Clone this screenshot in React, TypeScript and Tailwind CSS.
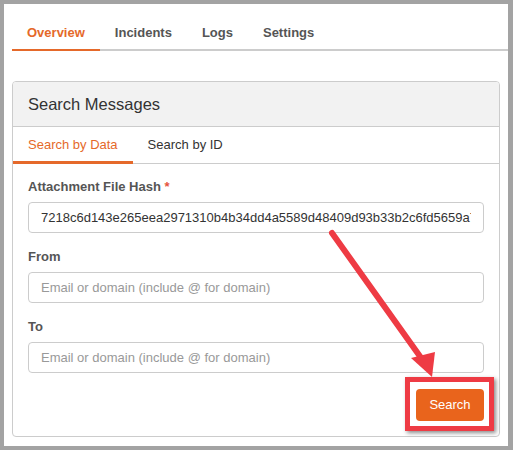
import { useState } from 'react'

const TABS = ['Overview', 'Incidents', 'Logs', 'Settings']
const HASH = '7218c6d143e265eea2971310b4b34dd4a5589d48409d93b33b2c6fd5659a7c1e'

const Field = ({ label, required, value, placeholder }: { label: string; required?: boolean; value?: string; placeholder?: string }) => (
  <div className="flex flex-col gap-[7px]">
    <label className="text-[13px] leading-[16px] font-bold text-[#555]">
      {label}
      {required && <span className="text-[#e5533d]"> *</span>}
    </label>
    <input
      className="h-[31px] w-full rounded-[4px] border border-[#cccccc] px-[12px] text-[13px] text-[#333] placeholder:text-[#999] outline-none"
      defaultValue={value}
      placeholder={placeholder}
    />
  </div>
)

export default function App() {
  const [tab, setTab] = useState('Overview')
  const [sub, setSub] = useState('data')

  return (
    <div className="relative w-[513px] h-[450px] bg-[#a3a3a3] pt-[4px] pl-[4px] pr-[5px] pb-[4px] font-['Liberation_Sans',Arial,sans-serif]">
      <div className="h-full bg-white">
        {/* top tabs */}
        <div className="ml-[8px] flex border-b-2 border-[#cccccc]">
          {TABS.map((t) => (
            <button
              key={t}
              onClick={() => setTab(t)}
              className={`-mb-[2px] border-b-2 px-[15px] pt-[21px] pb-[8px] text-[13px] leading-[16px] font-bold ${
                tab === t ? 'border-[#e5692a] text-[#e5692a]' : 'border-transparent text-[#555]'
              }`}
            >
              {t}
            </button>
          ))}
        </div>

        {/* card */}
        <div className="ml-[8px] mt-[30px] w-[488px] h-[356px] rounded-[4px] border border-[#cccccc] overflow-hidden">
          <div className="flex h-[45px] items-center border-b border-[#cccccc] bg-[#f2f2f2] px-[15px] text-[16.5px] text-[#333]">
            Search Messages
          </div>
          <div className="flex border-b border-[#cccccc]">
            <button
              onClick={() => setSub('data')}
              className={`-mb-px border-b-[3px] px-[15px] pt-[10px] pb-[8px] text-[13px] leading-[16px] ${
                sub === 'data' ? 'border-[#e5692a] text-[#e5692a]' : 'border-transparent text-[#333]'
              }`}
            >
              Search by Data
            </button>
            <button
              onClick={() => setSub('id')}
              className={`-mb-px border-b-[3px] px-[15px] pt-[10px] pb-[8px] text-[13px] leading-[16px] ${
                sub === 'id' ? 'border-[#e5692a] text-[#e5692a]' : 'border-transparent text-[#333]'
              }`}
            >
              Search by ID
            </button>
          </div>
          <div className="flex flex-col gap-[16px] px-[15px] pt-[15px]">
            <Field label="Attachment File Hash" required value={HASH} />
            <Field label="From" placeholder="Email or domain (include @ for domain)" />
            <Field label="To" placeholder="Email or domain (include @ for domain)" />
            <div className="flex justify-end">
              <button className="h-[32px] w-[68px] rounded-[4px] bg-[#e9641c] text-[13px] text-white">Search</button>
            </div>
          </div>
        </div>
      </div>

      {/* annotation overlay */}
      <div className="absolute left-[405px] top-[377px] h-[54px] w-[89px] border-[5px] border-[#ee3b44] shadow-[2px_2px_4px_rgba(0,0,0,0.45)]" />
      <svg className="absolute left-0 top-0 pointer-events-none" width="513" height="450" viewBox="0 0 513 450">
        <line x1="332" y1="233" x2="424" y2="362" stroke="#ee3b44" strokeWidth="6" strokeLinecap="round" />
        <polygon points="411,358 435,352 432,377" fill="#ee3b44" />
      </svg>
    </div>
  )
}
